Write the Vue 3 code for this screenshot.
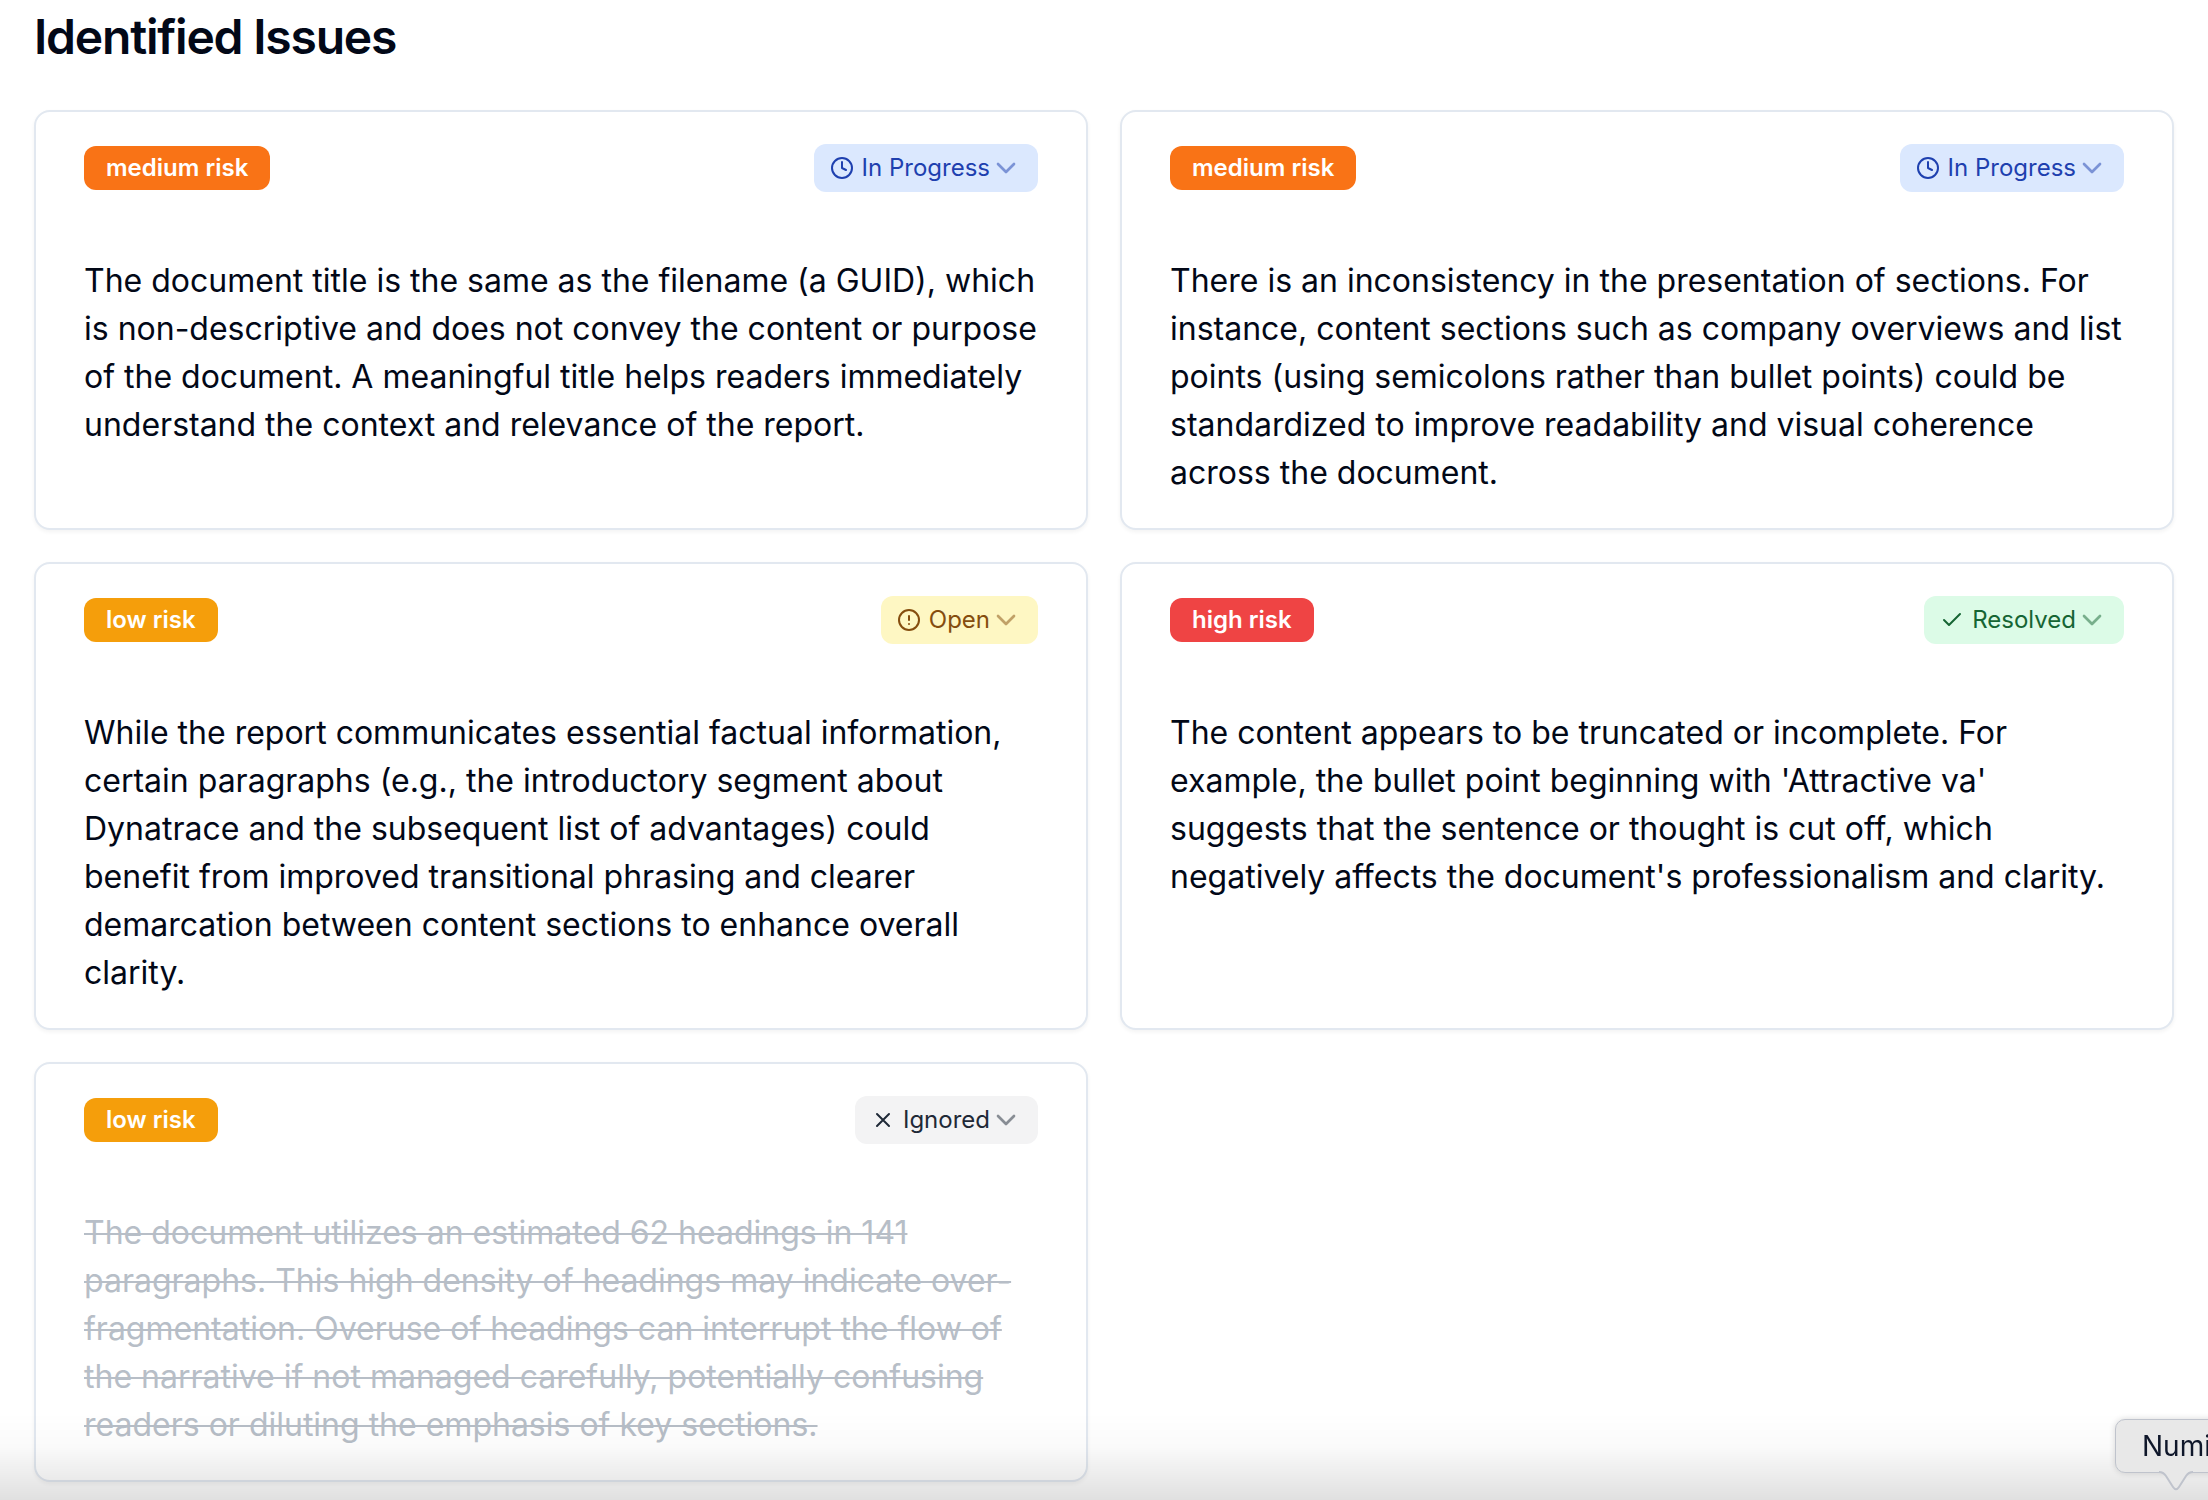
<script setup>
import { reactive } from "vue";

const statuses = {
  open: "Open",
  progress: "In Progress",
  resolved: "Resolved",
  ignored: "Ignored",
};

const issues = reactive([
  {
    id: 1,
    risk: "medium",
    status: "progress",
    text: "The document title is the same as the filename (a GUID), which is non-descriptive and does not convey the content or purpose of the document. A meaningful title helps readers immediately understand the context and relevance of the report.",
  },
  {
    id: 2,
    risk: "medium",
    status: "progress",
    text: "There is an inconsistency in the presentation of sections. For instance, content sections such as company overviews and list points (using semicolons rather than bullet points) could be standardized to improve readability and visual coherence across the document.",
  },
  {
    id: 3,
    risk: "low",
    status: "open",
    text: "While the report communicates essential factual information, certain paragraphs (e.g., the introductory segment about Dynatrace and the subsequent list of advantages) could benefit from improved transitional phrasing and clearer demarcation between content sections to enhance overall clarity.",
  },
  {
    id: 4,
    risk: "high",
    status: "resolved",
    text: "The content appears to be truncated or incomplete. For example, the bullet point beginning with 'Attractive va' suggests that the sentence or thought is cut off, which negatively affects the document's professionalism and clarity.",
  },
  {
    id: 5,
    risk: "low",
    status: "ignored",
    text: "The document utilizes an estimated 62 headings in 141 paragraphs. This high density of headings may indicate over-fragmentation. Overuse of headings can interrupt the flow of the narrative if not managed carefully, potentially confusing readers or diluting the emphasis of key sections.",
  },
]);
</script>

<template>
  <main class="page">
    <h1 class="title">Identified Issues</h1>

    <section class="grid">
      <article v-for="issue in issues" :key="issue.id" class="card">
        <header class="card__head">
          <span class="badge" :class="`badge--${issue.risk}`">{{ issue.risk }} risk</span>

          <div class="status" :class="`status--${issue.status}`">
            <svg class="status__icon" viewBox="0 0 24 24" aria-hidden="true">
              <template v-if="issue.status === 'progress'">
                <circle cx="12" cy="12" r="10" />
                <path d="M12 6v6l4 2" />
              </template>
              <template v-else-if="issue.status === 'open'">
                <circle cx="12" cy="12" r="10" />
                <path d="M12 8v4" />
                <path d="M12 16h.01" />
              </template>
              <path v-else-if="issue.status === 'resolved'" d="M20 6 9 17l-5-5" />
              <path v-else d="M18 6 6 18M6 6l12 12" />
            </svg>
            <select
              :id="`status-${issue.id}`"
              v-model="issue.status"
              class="status__select"
              aria-label="Status"
            >
              <option v-for="(label, key) in statuses" :key="key" :value="key">
                {{ label }}
              </option>
            </select>
            <svg class="status__arrow" viewBox="0 0 24 24" aria-hidden="true">
              <path d="m6 9 6 6 6-6" />
            </svg>
          </div>
        </header>

        <p class="card__text" :class="{ 'card__text--ignored': issue.status === 'ignored' }">
          {{ issue.text }}
        </p>
      </article>
    </section>

    <div class="fade"></div>

    <div class="tooltip">
      Numi
      <svg class="tooltip__tail" viewBox="0 0 34 20" aria-hidden="true">
        <path
          class="tooltip__fill"
          d="M0 0v1c3 0 5 1 7 4l7 11c2 3 4 3 6 0l7-11c2-3 4-4 7-4V0z"
        />
        <path
          class="tooltip__edge"
          d="M0 1c3 0 5 1 7 4l7 11c2 3 4 3 6 0l7-11c2-3 4-4 7-4"
        />
      </svg>
    </div>
  </main>
</template>

<style>
body {
  margin: 0;
  background-color: #fff;
}
</style>

<style scoped>
.page {
  padding: 13px 34px 18px;

  font-family: Inter, "Liberation Sans", sans-serif;
  color: #020817;
}

.title {
  margin: 0 0 49px;

  font-size: 48px;
  font-weight: 600;
  line-height: 48px;
  letter-spacing: -0.025em;
}

.grid {
  display: grid;
  grid-template-columns: repeat(2, minmax(0, 1fr));
  gap: 32px;
}

.card {
  padding: 32px 48px 31px;

  border: 2px solid #e2e8f0;
  border-radius: 16px;
  background-color: #fff;
  box-shadow: 0 2px 4px rgba(0, 0, 0, 0.05);
}

.card__head {
  display: flex;
  align-items: center;
  justify-content: space-between;
  margin-bottom: 65px;
}

.badge {
  padding: 6px 22px;

  border-radius: 12px;
  font-size: 24px;
  font-weight: 600;
  line-height: 32px;
  color: #fff;
}

.badge--low {
  background-color: #f59e0b;
}

.badge--medium {
  background-color: #f97316;
}

.badge--high {
  background-color: #ef4444;
}

.status {
  position: relative;
  border-radius: 12px;
}

.status--progress {
  background-color: #dbe8fe;
  color: #1e40af;
}

.status--open {
  background-color: #fef7c3;
  color: #854d0e;
}

.status--resolved {
  background-color: #dcfbe7;
  color: #166534;
}

.status--ignored {
  background-color: #f3f3f4;
  color: #1f2937;
}

.status__select {
  display: block;
  height: 48px;
  padding: 0 48px 2px;

  appearance: none;
  field-sizing: content;
  border: 0;
  border-radius: 12px;
  background: transparent;
  font: inherit;
  font-size: 24px;
  color: inherit;
  cursor: pointer;
}

.status__icon,
.status__arrow {
  position: absolute;

  fill: none;
  stroke: currentColor;
  stroke-width: 2;
  stroke-linecap: round;
  stroke-linejoin: round;
  pointer-events: none;
}

.status__icon {
  top: 12px;
  left: 16px;
  width: 24px;
  height: 24px;
}

.status__arrow {
  top: 8px;
  right: 16px;
  width: 32px;
  height: 32px;
  opacity: 0.5;
}

.card__text {
  margin: 0;

  font-size: 32px;
  line-height: 48px;
}

.card__text--ignored {
  color: #b7bec7;
  text-decoration: line-through;
  text-decoration-thickness: 2px;
}

.fade {
  position: fixed;
  right: 0;
  bottom: 0;
  left: 0;
  height: 88px;

  background: linear-gradient(
    to bottom,
    transparent,
    rgba(0, 0, 0, 0.02) 40%,
    rgba(0, 0, 0, 0.12)
  );
  pointer-events: none;
}

.tooltip {
  position: fixed;
  right: -16px;
  bottom: 27px;
  width: 81px;
  padding: 0 0 0 26px;

  border: 1px solid #bfc3cc;
  border-radius: 10px;
  background-color: #e8e8e8;
  box-shadow: 0 0 6px rgba(0, 0, 0, 0.15);
  font-size: 28px;
  line-height: 52px;
  color: #0f172a;
}

.tooltip__tail {
  position: absolute;
  top: 51px;
  left: 43px;
  width: 34px;
  height: 20px;
}

.tooltip__fill {
  fill: #e8e8e8;
}

.tooltip__edge {
  fill: none;
  stroke: #bfc3cc;
  stroke-width: 2;
}
</style>
